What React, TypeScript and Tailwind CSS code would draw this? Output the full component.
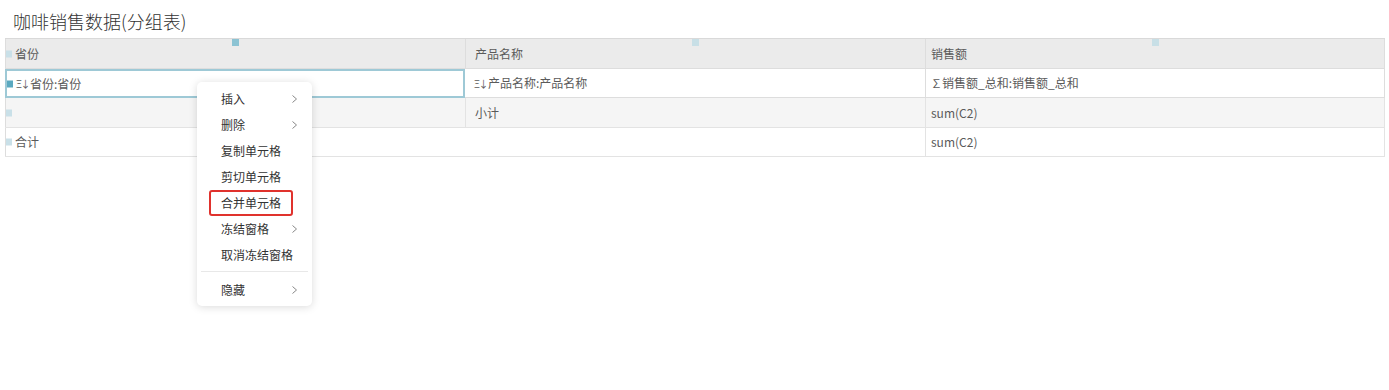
import React from "react";

const font = { fontFamily: '"Noto Sans CJK SC", "Noto Sans", sans-serif' };

function Chevron() {
  return (
    <svg width="7" height="10" viewBox="0 0 7 10" className="absolute right-[14px]">
      <path d="M1.5 1.5 L5.5 5 L1.5 8.5" fill="none" stroke="#888" strokeWidth="1" />
    </svg>
  );
}

function MenuItem({ label, sub, boxed }: { label: string; sub?: boolean; boxed?: boolean }) {
  return (
    <div className="relative flex items-center h-[26px] pl-[24px] text-[12px] text-[#333]">
      {boxed ? (
        <span className="absolute left-[12px] top-0 w-[84px] h-[26px] border-2 border-[#e0322d] rounded-[3px]" />
      ) : null}
      <span className="relative">{label}</span>
      {sub ? <Chevron /> : null}
    </div>
  );
}

function LeftMark({ dark }: { dark?: boolean }) {
  return (
    <span
      className={
        "absolute left-0 top-1/2 -translate-y-1/2 w-[6px] h-[7px] " +
        (dark ? "bg-[#5ba9c0]" : "bg-[#c9e0e8]")
      }
    />
  );
}

function Sort() {
  return <span className="inline-block text-[10px] tracking-[-1.5px] mr-[1px]">Ξ↓</span>;
}

export default function App() {
  return (
    <div className="w-[1389px] h-[390px] bg-white relative" style={font}>
      <div className="h-[38px] pl-[13px] pt-[9px] text-[18px] leading-[24px] text-[#333] font-light">
        咖啡销售数据(分组表)
      </div>
      <div className="mx-[5px] w-[1380px] text-[12px] text-[#5a5a5a]">
        {/* header */}
        <div className="grid grid-cols-3 h-[30px] bg-[#ebebeb] border-t border-[#d9d9d9]">
          <div className="relative flex items-center pl-[9px] border-l border-[#ddd]">
            <LeftMark />
            <span className="absolute top-0 left-[226px] w-[7px] h-[7px] bg-[#8cc3d3]" />
            省份
          </div>
          <div className="relative flex items-center pl-[9px] border-l border-[#ddd]">
            <span className="absolute top-0 left-[226px] w-[7px] h-[7px] bg-[#c8dfe6]" />
            产品名称
          </div>
          <div className="relative flex items-center pl-[5px] border-l border-r border-[#ddd]">
            <span className="absolute top-0 left-[226px] w-[7px] h-[7px] bg-[#c8dfe6]" />
            销售额
          </div>
        </div>
        {/* row 2 */}
        <div className="grid grid-cols-3 h-[30px] bg-white border-t border-[#ddd]">
          <div className="relative flex items-center pl-[9px] border-2 border-[#9ec9d6]">
            <LeftMark dark />
            <Sort />
            省份:省份
          </div>
          <div className="relative flex items-center pl-[9px] border-b border-[#ddd]">
            <Sort />
            产品名称:产品名称
          </div>
          <div className="relative flex items-center pl-[5px] border-l border-r border-b border-[#ddd]">
            <span className="text-[11px]">∑</span>销售额_总和:销售额_总和
          </div>
        </div>
        {/* row 3 */}
        <div className="grid grid-cols-3 h-[30px] bg-[#f5f5f5] border-b border-[#e3e3e3]">
          <div className="relative flex items-center pl-[9px] border-l border-[#ddd]">
            <LeftMark />
          </div>
          <div className="relative flex items-center pl-[9px] border-l border-[#e3e3e3]">小计</div>
          <div className="relative flex items-center pl-[5px] border-l border-r border-[#e3e3e3]">sum(C2)</div>
        </div>
        {/* row 4 */}
        <div className="grid grid-cols-3 h-[29px] bg-white border-b border-[#e3e3e3]">
          <div className="relative col-span-2 flex items-center pl-[9px] border-l border-[#ddd]">
            <LeftMark />
            合计
          </div>
          <div className="relative flex items-center pl-[5px] border-l border-r border-[#e3e3e3]">sum(C2)</div>
        </div>
      </div>

      {/* context menu */}
      <div className="absolute left-[197px] top-[82px] w-[115px] h-[224px] bg-white rounded-[5px] shadow-[0_1px_8px_rgba(0,0,0,0.15)] pt-[4px]">
        <MenuItem label="插入" sub />
        <MenuItem label="删除" sub />
        <MenuItem label="复制单元格" />
        <MenuItem label="剪切单元格" />
        <MenuItem label="合并单元格" boxed />
        <MenuItem label="冻结窗格" sub />
        <MenuItem label="取消冻结窗格" />
        <div className="mx-[4px] mt-[3px] mb-[5px] h-px bg-[#e8e8e8]" />
        <MenuItem label="隐藏" sub />
      </div>
    </div>
  );
}
